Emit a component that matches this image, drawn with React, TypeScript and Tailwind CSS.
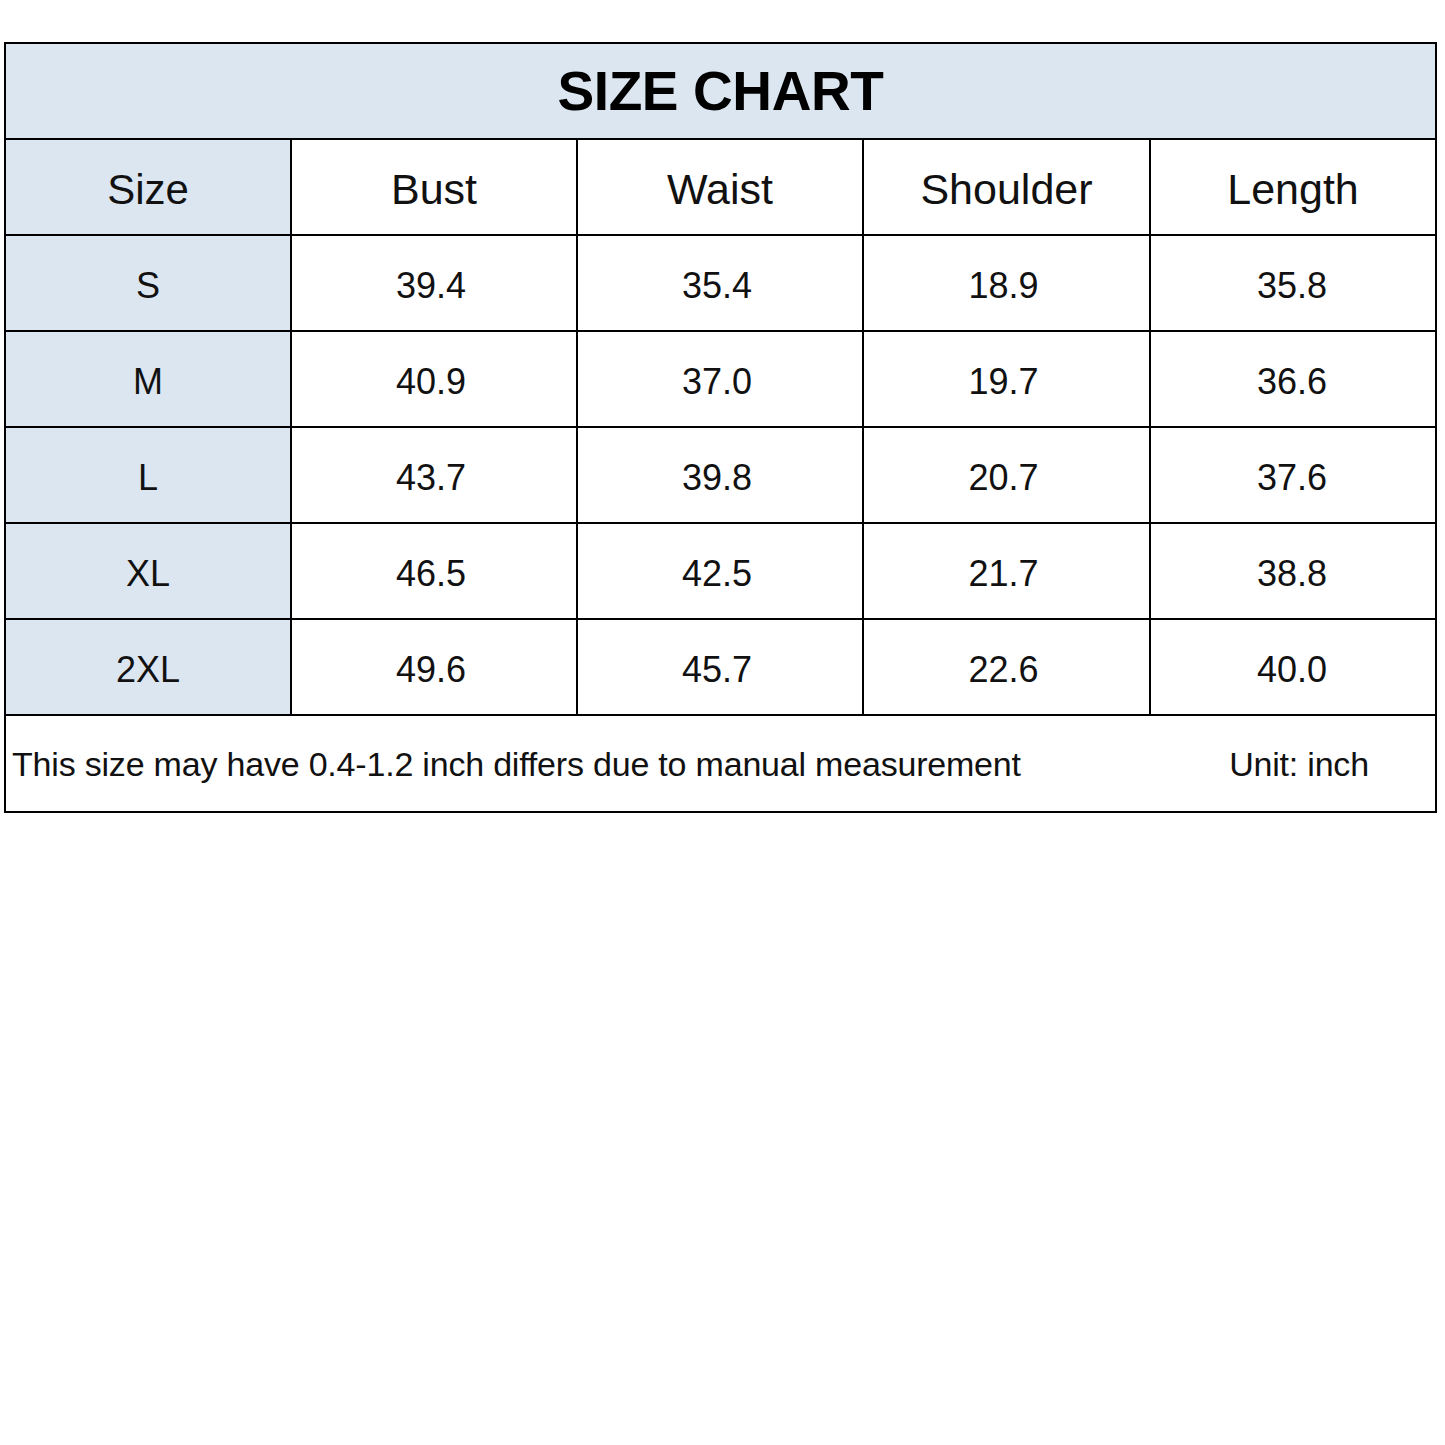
const rows = [
  { size: "S", bust: "39.4", waist: "35.4", shoulder: "18.9", length: "35.8" },
  { size: "M", bust: "40.9", waist: "37.0", shoulder: "19.7", length: "36.6" },
  { size: "L", bust: "43.7", waist: "39.8", shoulder: "20.7", length: "37.6" },
  { size: "XL", bust: "46.5", waist: "42.5", shoulder: "21.7", length: "38.8" },
  { size: "2XL", bust: "49.6", waist: "45.7", shoulder: "22.6", length: "40.0" },
];

const headers = ["Bust", "Waist", "Shoulder", "Length"];

const cols = "grid grid-cols-[286px_286px_286px_287px_284px]";

export default function App() {
  return (
    <div className="min-h-[1445px] w-[1445px] bg-white pt-[42px] pl-[4px] font-['Liberation_Sans',Arial,sans-serif] text-[#111]">
      <div className="w-[1433px] border-2 border-black">
        {/* Title */}
        <div className="flex h-[96px] items-center justify-center border-b-2 border-black bg-[#dce6f1] pt-[1px]">
          <h1 className="text-[55px] font-bold tracking-[-0.4px] text-black">SIZE CHART</h1>
        </div>

        {/* Header row */}
        <div className={`${cols} h-[96px] border-b-2 border-black`}>
          <div className="flex items-center justify-center border-r-2 border-black bg-[#dce6f1] pt-[4px] text-[42px]">
            Size
          </div>
          {headers.map((h, i) => (
            <div
              key={h}
              className={
                i < headers.length - 1
                  ? "flex items-center justify-center border-r-2 border-black pt-[4px] text-[43px]"
                  : "flex items-center justify-center pt-[4px] text-[43px]"
              }
            >
              {h}
            </div>
          ))}
        </div>

        {/* Data rows */}
        {rows.map((r) => (
          <div key={r.size} className={`${cols} h-[96px] border-b-2 border-black text-[36px]`}>
            <div className="flex items-center justify-center border-r-2 border-black bg-[#dce6f1] pt-[5px]">
              {r.size}
            </div>
            <div className="flex items-center justify-center border-r-2 border-black pt-[5px] pr-[6px]">{r.bust}</div>
            <div className="flex items-center justify-center border-r-2 border-black pt-[5px] pr-[6px]">{r.waist}</div>
            <div className="flex items-center justify-center border-r-2 border-black pt-[5px] pr-[6px]">{r.shoulder}</div>
            <div className="flex items-center justify-center pt-[5px] pr-[2px]">{r.length}</div>
          </div>
        ))}

        {/* Footer note */}
        <div className={`${cols} h-[95px] text-[34px] tracking-[-0.2px]`}>
          <div className="col-span-4 flex items-center pl-[6px] pt-[2px]">
            This size may have 0.4-1.2 inch differs due to manual measurement
          </div>
          <div className="flex items-center justify-center pl-[12px] pt-[2px]">Unit: inch</div>
        </div>
      </div>
    </div>
  );
}
